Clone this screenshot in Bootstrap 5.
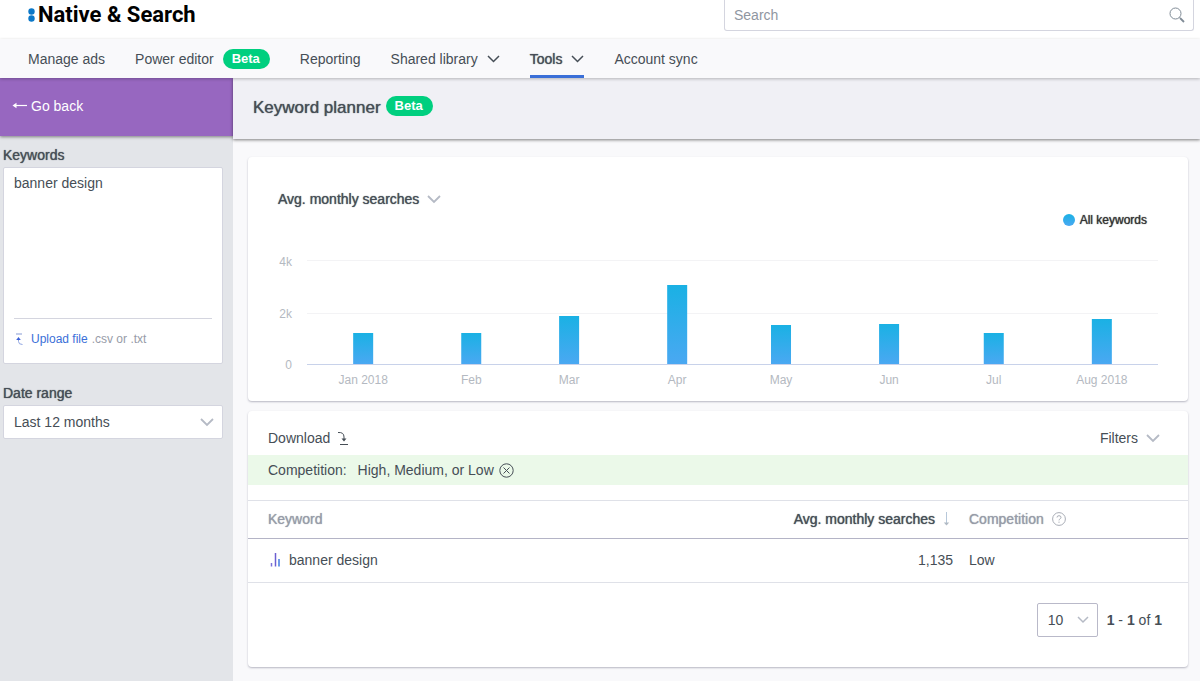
<!DOCTYPE html>
<html lang="en">
<head>
<meta charset="utf-8">
<meta name="viewport" content="width=device-width, initial-scale=1">
<title>Keyword planner - Native &amp; Search</title>
<link href="https://cdn.jsdelivr.net/npm/bootstrap@5.3.0/dist/css/bootstrap.min.css" rel="stylesheet">
<style>
  :root { --ink: #464e56; --muted: #979ca8; --line: #d4d5df; --accent: #3a6fd8; }
  body { font-family: "Liberation Sans", Arial, sans-serif; font-size: 14px; line-height: 20px; color: var(--ink); background: #f9f9fb; }
  svg { display: block; flex: none; }
  .chev { color: #b5bac5; }
  .semi { font-weight: 400; text-shadow: 0 0 1px currentColor; }
  .plain { background: none; border: 0; padding: 0; color: inherit; }

  .topbar { height: 39px; padding-left: 28px; padding-right: 6px; }
  .brand { font-family: Roboto, "Liberation Sans", sans-serif; font-size: 22px; line-height: 30px; font-weight: 700; color: #000; gap: 3px; text-decoration: none; }
  .search-box { width: 470px; height: 31px; border: 1px solid var(--line); border-top: 0; border-radius: 0 0 3px 3px; padding: 0 8px 0 9px; }
  .search-box input { font-size: 14px; color: var(--ink); outline: 0; }
  .search-box input::placeholder { color: #8f96a1; opacity: 1; }

  .mainnav { height: 39px; gap: 30px; padding-left: 28px; background: #f9f9fb; box-shadow: 0 1px 3px rgba(0,0,0,.25); z-index: 2; }
  .mainnav .nav-link { padding: 3px 0 0; color: var(--ink); height: 39px; gap: 9px; border-bottom: 3px solid transparent; }
  .mainnav .nav-link.active { border-bottom-color: var(--accent); }
  .pill { background: #00cf7f; color: #fff; border-radius: 10px; font-size: 13px; line-height: 20px; font-weight: 700; padding: 0 10px 0 9px; height: 20px; }

  .side { width: 233px; flex: none; background: #e3e5e9; }
  .goback { height: 58px; padding-left: 12px; padding-bottom: 2px; background: #9767c0; box-shadow: 0 1px 3px rgba(0,0,0,.45); color: #fff; text-decoration: none; gap: 3px; }
  .side form { padding: 9px 10px 0 3px; }
  .side label { margin-bottom: 2px; }
  .field { background: #fff; border: 1px solid var(--line); border-radius: 2px; }
  .keywords { padding: 0 10px; margin-bottom: 19px; }
  .keywords textarea { height: 151px; padding: 5px 0 0; border: 0; border-bottom: 1px solid var(--line); resize: none; outline: 0; color: var(--ink); font-size: 14px; line-height: 20px; border-radius: 0; }
  .upload { height: 44px; padding-bottom: 4px; font-size: 12px; color: var(--muted); gap: 4px; }
  .upload button { color: var(--accent); gap: 8px; }
  .pick { position: relative; }
  .pick select { appearance: none; width: 100%; height: 34px; padding: 0 10px; color: var(--ink); }
  .pick svg { position: absolute; right: 9px; top: 13px; pointer-events: none; }

  .pagehead { height: 61px; padding-left: 20px; padding-bottom: 6px; gap: 5px; background: #f0f0f5; box-shadow: 0 1px 3px rgba(0,0,0,.5); }
  .pagehead h1 { font-size: 17px; line-height: 22px; margin: 4px 0 0; }
  .content { padding: 18px 12px 14px 15px; }
  .panel { background: #fff; border-radius: 4px; box-shadow: 0 1px 2px rgba(60,60,90,.35); }

  .chart-panel { padding: 32px 30px 11px; margin-bottom: 10px; }
  .legend-row { font-size: 12px; line-height: 22px; color: #333; gap: 5px; padding-right: 11px; }
  .dot { width: 12px; height: 12px; border-radius: 6px; background: linear-gradient(#1ab1e4, #4aa8f2); }
  .plot { padding-left: 29px; margin-top: 19px; }
  .plot svg { width: 100%; height: 140px; overflow: visible; }
  .plot text { font-size: 12px; fill: #b4b9c1; }

  .toolbar { height: 44px; padding: 10px 28px 0 20px; }
  .filterbar { height: 30px; padding-left: 20px; background: #ebf9e9; margin-bottom: 15px; }
  .filterbar .name { margin-right: 11px; }
  .filterbar .value { margin-right: 5px; }
  .results { width: 100%; border-top: 1px solid #dfe1e8; }
  .results th { height: 38px; padding: 0 8px 2px; border-bottom: 1px solid #b4b4c6; color: var(--muted); }
  .results td { height: 44px; padding: 0 8px 2px; border-bottom: 1px solid #dfe1e8; }
  .results th:first-child, .results td:first-child { padding-left: 20px; }
  .results th:last-child { width: 227px; }
  .results th.sorted { color: var(--ink); padding-right: 11px; }
  .pager { padding: 20px 26px 30px; gap: 9px; }
  .pager select { width: 61px; border: 1px solid #b9b9c9; border-radius: 2px; background: #fff; }
</style>
<script src="https://cdn.jsdelivr.net/npm/bootstrap@5.3.0/dist/js/bootstrap.bundle.min.js"></script>
</head>
<body class="d-flex flex-column min-vh-100">

<header class="topbar bg-white d-flex justify-content-between align-items-start">
  <a href="#" class="brand d-flex align-items-center">
    <svg width="7" height="14" viewBox="0 0 7 14" fill="#0b78c8"><circle cx="3.5" cy="3.5" r="3.2"/><circle cx="3.5" cy="10.5" r="3.2"/></svg>
    Native &amp; Search
  </a>
  <div class="search-box bg-white d-flex align-items-center">
    <input type="search" class="plain flex-grow-1" placeholder="Search" aria-label="Search">
    <svg width="16" height="16" viewBox="0 0 16 16" fill="none" stroke="#7f8b96"><circle cx="6.5" cy="6.5" r="5.5"/><path d="M10.500 10.500l1 1"/><path d="M11 11l4 4" stroke-width="1.800"/></svg>
  </div>
</header>

<nav class="mainnav nav flex-nowrap position-relative" aria-label="Main">
  <a class="nav-link d-flex align-items-center" href="#">Manage ads</a>
  <a class="nav-link d-flex align-items-center" href="#">Power editor <span class="pill">Beta</span></a>
  <a class="nav-link d-flex align-items-center" href="#">Reporting</a>
  <a class="nav-link d-flex align-items-center" href="#">Shared library
    <svg width="13" height="8" viewBox="0 0 13 8" fill="none" stroke="currentColor" stroke-width="1.5"><path d="M1 1l5.500 5.500L12 1"/></svg></a>
  <a class="nav-link active d-flex align-items-center" href="#" aria-current="page"><span class="semi">Tools</span>
    <svg width="13" height="8" viewBox="0 0 13 8" fill="none" stroke="currentColor" stroke-width="1.5"><path d="M1 1l5.500 5.500L12 1"/></svg></a>
  <a class="nav-link d-flex align-items-center" href="#">Account sync</a>
</nav>

<div class="d-flex flex-grow-1">
  <aside class="side">
    <a href="#" class="goback d-flex align-items-center">
      <svg width="16" height="8" viewBox="0 0 16 8" fill="none" stroke="currentColor"><path d="M2 3.500H15" stroke-width="1.2"/><path d="M.5 3.500L4.500 .8v5.400z" fill="currentColor" stroke="none"/></svg>
      Go back
    </a>
    <form>
      <label class="semi d-block" for="kw">Keywords</label>
      <div class="field keywords">
        <textarea id="kw" class="d-block w-100">banner design</textarea>
        <div class="upload d-flex align-items-center">
          <button type="button" class="plain d-flex align-items-center">
            <svg width="9" height="14" viewBox="0 0 9 14" fill="none"><path d="M2 2H8" stroke="#c3cdea" stroke-width="2"/><path d="M4.500 7v2.500Q4.500 12.500 8.500 12.500" stroke="#8fa5e2"/><path d="M2.200 8L4.500 5l2.300 3z" fill="#3a5fd8"/></svg>
            Upload file</button>
          <span>.csv or .txt</span>
        </div>
      </div>
      <label class="semi d-block" for="range">Date range</label>
      <div class="pick">
        <select id="range" class="field"><option>Last 12 months</option></select>
        <svg class="chev" width="14" height="9" viewBox="0 0 14 9" fill="none" stroke="currentColor" stroke-width="1.8"><path d="M1 1l6 6 6-6"/></svg>
      </div>
    </form>
  </aside>

  <main class="flex-grow-1">
    <div class="pagehead d-flex align-items-center">
      <h1 class="semi">Keyword planner</h1><span class="pill">Beta</span>
    </div>
    <div class="content">
      <section class="panel chart-panel">
        <button type="button" class="plain d-flex align-items-center gap-2"><span class="semi">Avg. monthly searches</span>
          <svg class="chev" width="14" height="9" viewBox="0 0 14 9" fill="none" stroke="currentColor" stroke-width="1.8"><path d="M1 1l6 6 6-6"/></svg></button>
        <div class="legend-row d-flex align-items-center justify-content-end"><span class="dot"></span><span class="semi">All keywords</span></div>
        <div class="plot">
          <svg role="img" aria-label="Average monthly searches, January to August 2018">
            <defs><linearGradient id="bar" x1="0" y1="0" x2="0" y2="1"><stop offset="0" stop-color="#1ab1e4"/><stop offset="1" stop-color="#4aa8f2"/></linearGradient></defs>
            <g shape-rendering="crispEdges">
              <rect width="100%" height="1" y="10" fill="#f3f3f5"/><rect width="100%" height="1" y="63" fill="#f3f3f5"/>
              <rect width="100%" height="1" y="114" fill="#c8d2ea"/>
            </g>
            <g text-anchor="end"><text x="-15" y="16">4k</text><text x="-15" y="68">2k</text><text x="-15" y="119">0</text></g>
            <g text-anchor="middle" fill="url(#bar)">
              <svg x="6.6%"><rect x="-10" y="83" width="20" height="31"/><text y="134">Jan 2018</text></svg>
              <svg x="19.3%"><rect x="-10" y="83" width="20" height="31"/><text y="134">Feb</text></svg>
              <svg x="30.8%"><rect x="-10" y="66" width="20" height="48"/><text y="134">Mar</text></svg>
              <svg x="43.5%"><rect x="-10" y="35" width="20" height="79"/><text y="134">Apr</text></svg>
              <svg x="55.7%"><rect x="-10" y="75" width="20" height="39"/><text y="134">May</text></svg>
              <svg x="68.4%"><rect x="-10" y="74" width="20" height="40"/><text y="134">Jun</text></svg>
              <svg x="80.7%"><rect x="-10" y="83" width="20" height="31"/><text y="134">Jul</text></svg>
              <svg x="93.4%"><rect x="-10" y="69" width="20" height="45"/><text y="134">Aug 2018</text></svg>
            </g>
          </svg>
        </div>
      </section>

      <section class="panel">
        <div class="toolbar d-flex align-items-center justify-content-between">
          <button type="button" class="plain d-flex align-items-center gap-2">Download
            <svg width="10" height="14" viewBox="0 0 10 14" fill="none" stroke="currentColor"><path d="M0 1.500Q6 1 6 6v3"/><path d="M3.500 7.500h5L6 10.500z" fill="currentColor" stroke="none"/><path d="M2 13.500h8"/></svg></button>
          <button type="button" class="plain d-flex align-items-center gap-2">Filters
            <svg class="chev" width="14" height="9" viewBox="0 0 14 9" fill="none" stroke="currentColor" stroke-width="1.8"><path d="M1 1l6 6 6-6"/></svg></button>
        </div>
        <div class="filterbar d-flex align-items-center">
          <span class="name">Competition:</span><span class="value">High, Medium, or Low</span>
          <button type="button" class="plain" aria-label="Remove filter"><svg width="15" height="15" viewBox="0 0 15 15" fill="none" stroke="currentColor"><circle cx="7.500" cy="7.500" r="6.700"/><path d="M4.500 4.500l6 6m0-6l-6 6"/></svg></button>
        </div>
        <table class="results">
          <thead><tr>
            <th scope="col" class="semi">Keyword</th>
            <th scope="col" class="semi sorted"><div class="d-flex align-items-center justify-content-end gap-2">Avg. monthly searches
              <svg width="7" height="14" viewBox="0 0 7 14" fill="none" stroke="#b7c8da"><path d="M3.500 0v12"/><path d="M.8 10.500h5.400L3.500 13.500z" fill="#b0b9c4" stroke="none"/></svg></div></th>
            <th scope="col"><div class="d-flex align-items-center"><span class="semi me-2">Competition</span>
              <svg width="14" height="14" viewBox="0 0 14 14" fill="none" stroke="#a9adb6"><circle cx="7" cy="7" r="6.400"/><path d="M5 5.500Q5 3.700 7 3.700T9 5.400Q9 6.300 8 6.900T7 8.400M7 9.600v1.200"/></svg></div></th>
          </tr></thead>
          <tbody><tr>
            <td><div class="d-flex align-items-center gap-2">
              <svg width="13" height="16" viewBox="0 0 13 16"><path d="M3.500 11v3.500" stroke="#7b70d8" stroke-width="1.500"/><path d="M7.500 1v13.500" stroke="#6c5fd0" stroke-width="1.500"/><path d="M11 7v7.500" stroke="#3f7be0" stroke-width="1.500"/></svg>
              banner design</div></td>
            <td class="text-end">1,135</td>
            <td>Low</td>
          </tr></tbody>
        </table>
        <div class="pager d-flex align-items-center justify-content-end">
          <div class="pick"><select aria-label="Rows per page"><option>10</option></select>
            <svg class="chev" width="12" height="8" viewBox="0 0 12 8" fill="none" stroke="currentColor" stroke-width="1.5"><path d="M1 1l5 5 5-5"/></svg></div>
          <span><b>1</b> - <b>1</b> of <b>1</b></span>
        </div>
      </section>
    </div>
  </main>
</div>
</body>
</html>
